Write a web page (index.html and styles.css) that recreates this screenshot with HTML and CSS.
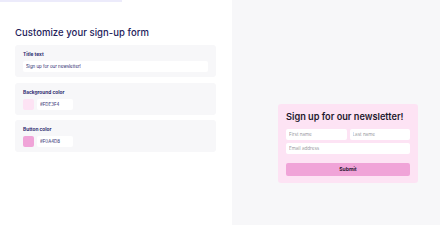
FILE: index.html
```html
<!DOCTYPE html>
<html lang="en">

<head>
    <meta charset="UTF-8">
    <meta name="viewport" content="width=device-width, initial-scale=1.0">
    <title>Customize your sign-up form</title>
    <link rel="stylesheet" href="styles.css">
</head>

<body>
    <div class="editor">
        <div class="progress"></div>
        <div class="editor-body">
            <h1>Customize your sign-up form</h1>

            <div class="card">
                <label class="field-label" for="title-text">Title text</label>
                <input type="text" id="title-text" class="text-input" value="Sign up for our newsletter!">
            </div>

            <div class="card">
                <label class="field-label" for="bg-color">Background color</label>
                <div class="color-row">
                    <span class="swatch swatch-bg"></span>
                    <input type="text" id="bg-color" class="color-input" value="#FDE3F4">
                </div>
            </div>

            <div class="card">
                <label class="field-label" for="btn-color">Button color</label>
                <div class="color-row">
                    <span class="swatch swatch-btn"></span>
                    <input type="text" id="btn-color" class="color-input" value="#F0A4D8">
                </div>
            </div>
        </div>
    </div>

    <div class="preview">
        <form class="signup" action="#">
            <h2>Sign up for our newsletter!</h2>
            <div class="name-row">
                <input type="text" placeholder="First name">
                <input type="text" placeholder="Last name">
            </div>
            <input type="email" placeholder="Email address">
            <button type="submit">Submit</button>
        </form>
    </div>
</body>

</html>
```

FILE: styles.css
```css
body {
    font-family: Inter, "Open Sans", sans-serif;
    margin: 0;
    display: flex;
    height: 225px;
    overflow: hidden;
    background-color: #fff;
}

.editor {
    width: 232px;
    flex-shrink: 0;
}

.progress {
    width: 122px;
    height: 2px;
    background-color: #ecebfb;
}

.editor-body {
    display: flex;
    flex-direction: column;
    gap: 5.5px;
    padding: 24.5px 16px 0 15px;
}

h1 {
    margin: 0 0 1px 0;
    font-size: 9.5px;
    line-height: 12px;
    font-weight: 500;
    color: #24215a;
    letter-spacing: 0.05px;
}

.card {
    display: flex;
    flex-direction: column;
    background-color: #f7f7f9;
    border-radius: 3px;
    padding: 5px 8px;
}

.field-label {
    font-size: 4.8px;
    line-height: 8px;
    font-weight: 700;
    color: #2d2a6e;
    margin-bottom: 3px;
}

.text-input,
.color-input {
    height: 11px;
    border: none;
    border-radius: 2px;
    background-color: #fff;
    box-sizing: border-box;
    padding: 0 3px;
    font-family: Inter, sans-serif;
    font-size: 4.4px;
    color: #2d2a6e;
    outline: none;
}

.color-row {
    display: flex;
    gap: 3px;
}

.swatch {
    width: 11px;
    height: 11px;
    border-radius: 2px;
}

.swatch-bg {
    background-color: #fde3f4;
}

.swatch-btn {
    background-color: #f0a4d8;
}

.color-input {
    width: 36px;
}

.preview {
    flex: 1;
    background-color: #f7f7f9;
    padding: 104px 0 0 46px;
}

.signup {
    width: 140px;
    box-sizing: border-box;
    background-color: #fde3f4;
    border-radius: 3px;
    padding: 6.5px 8px 7px 8px;
    display: flex;
    flex-direction: column;
}

h2 {
    margin: 0 0 6px 0;
    font-size: 9.2px;
    line-height: 12px;
    font-weight: 600;
    color: #1e1a2e;
}

.name-row {
    display: flex;
    gap: 3px;
    margin-bottom: 3px;
}

.name-row input {
    flex: 1;
    min-width: 0;
}

.signup input {
    height: 11px;
    border: none;
    border-radius: 2px;
    background-color: #fff;
    box-sizing: border-box;
    padding: 0 3px;
    font-family: Inter, sans-serif;
    font-size: 4.6px;
    outline: none;
}

.signup input::placeholder {
    color: #9a9a9f;
}

.signup button {
    margin-top: 9px;
    height: 13px;
    border: none;
    border-radius: 2px;
    background-color: #f0a4d8;
    color: #2a1630;
    font-family: Inter, sans-serif;
    font-size: 5px;
    font-weight: 700;
    cursor: pointer;
}
```
